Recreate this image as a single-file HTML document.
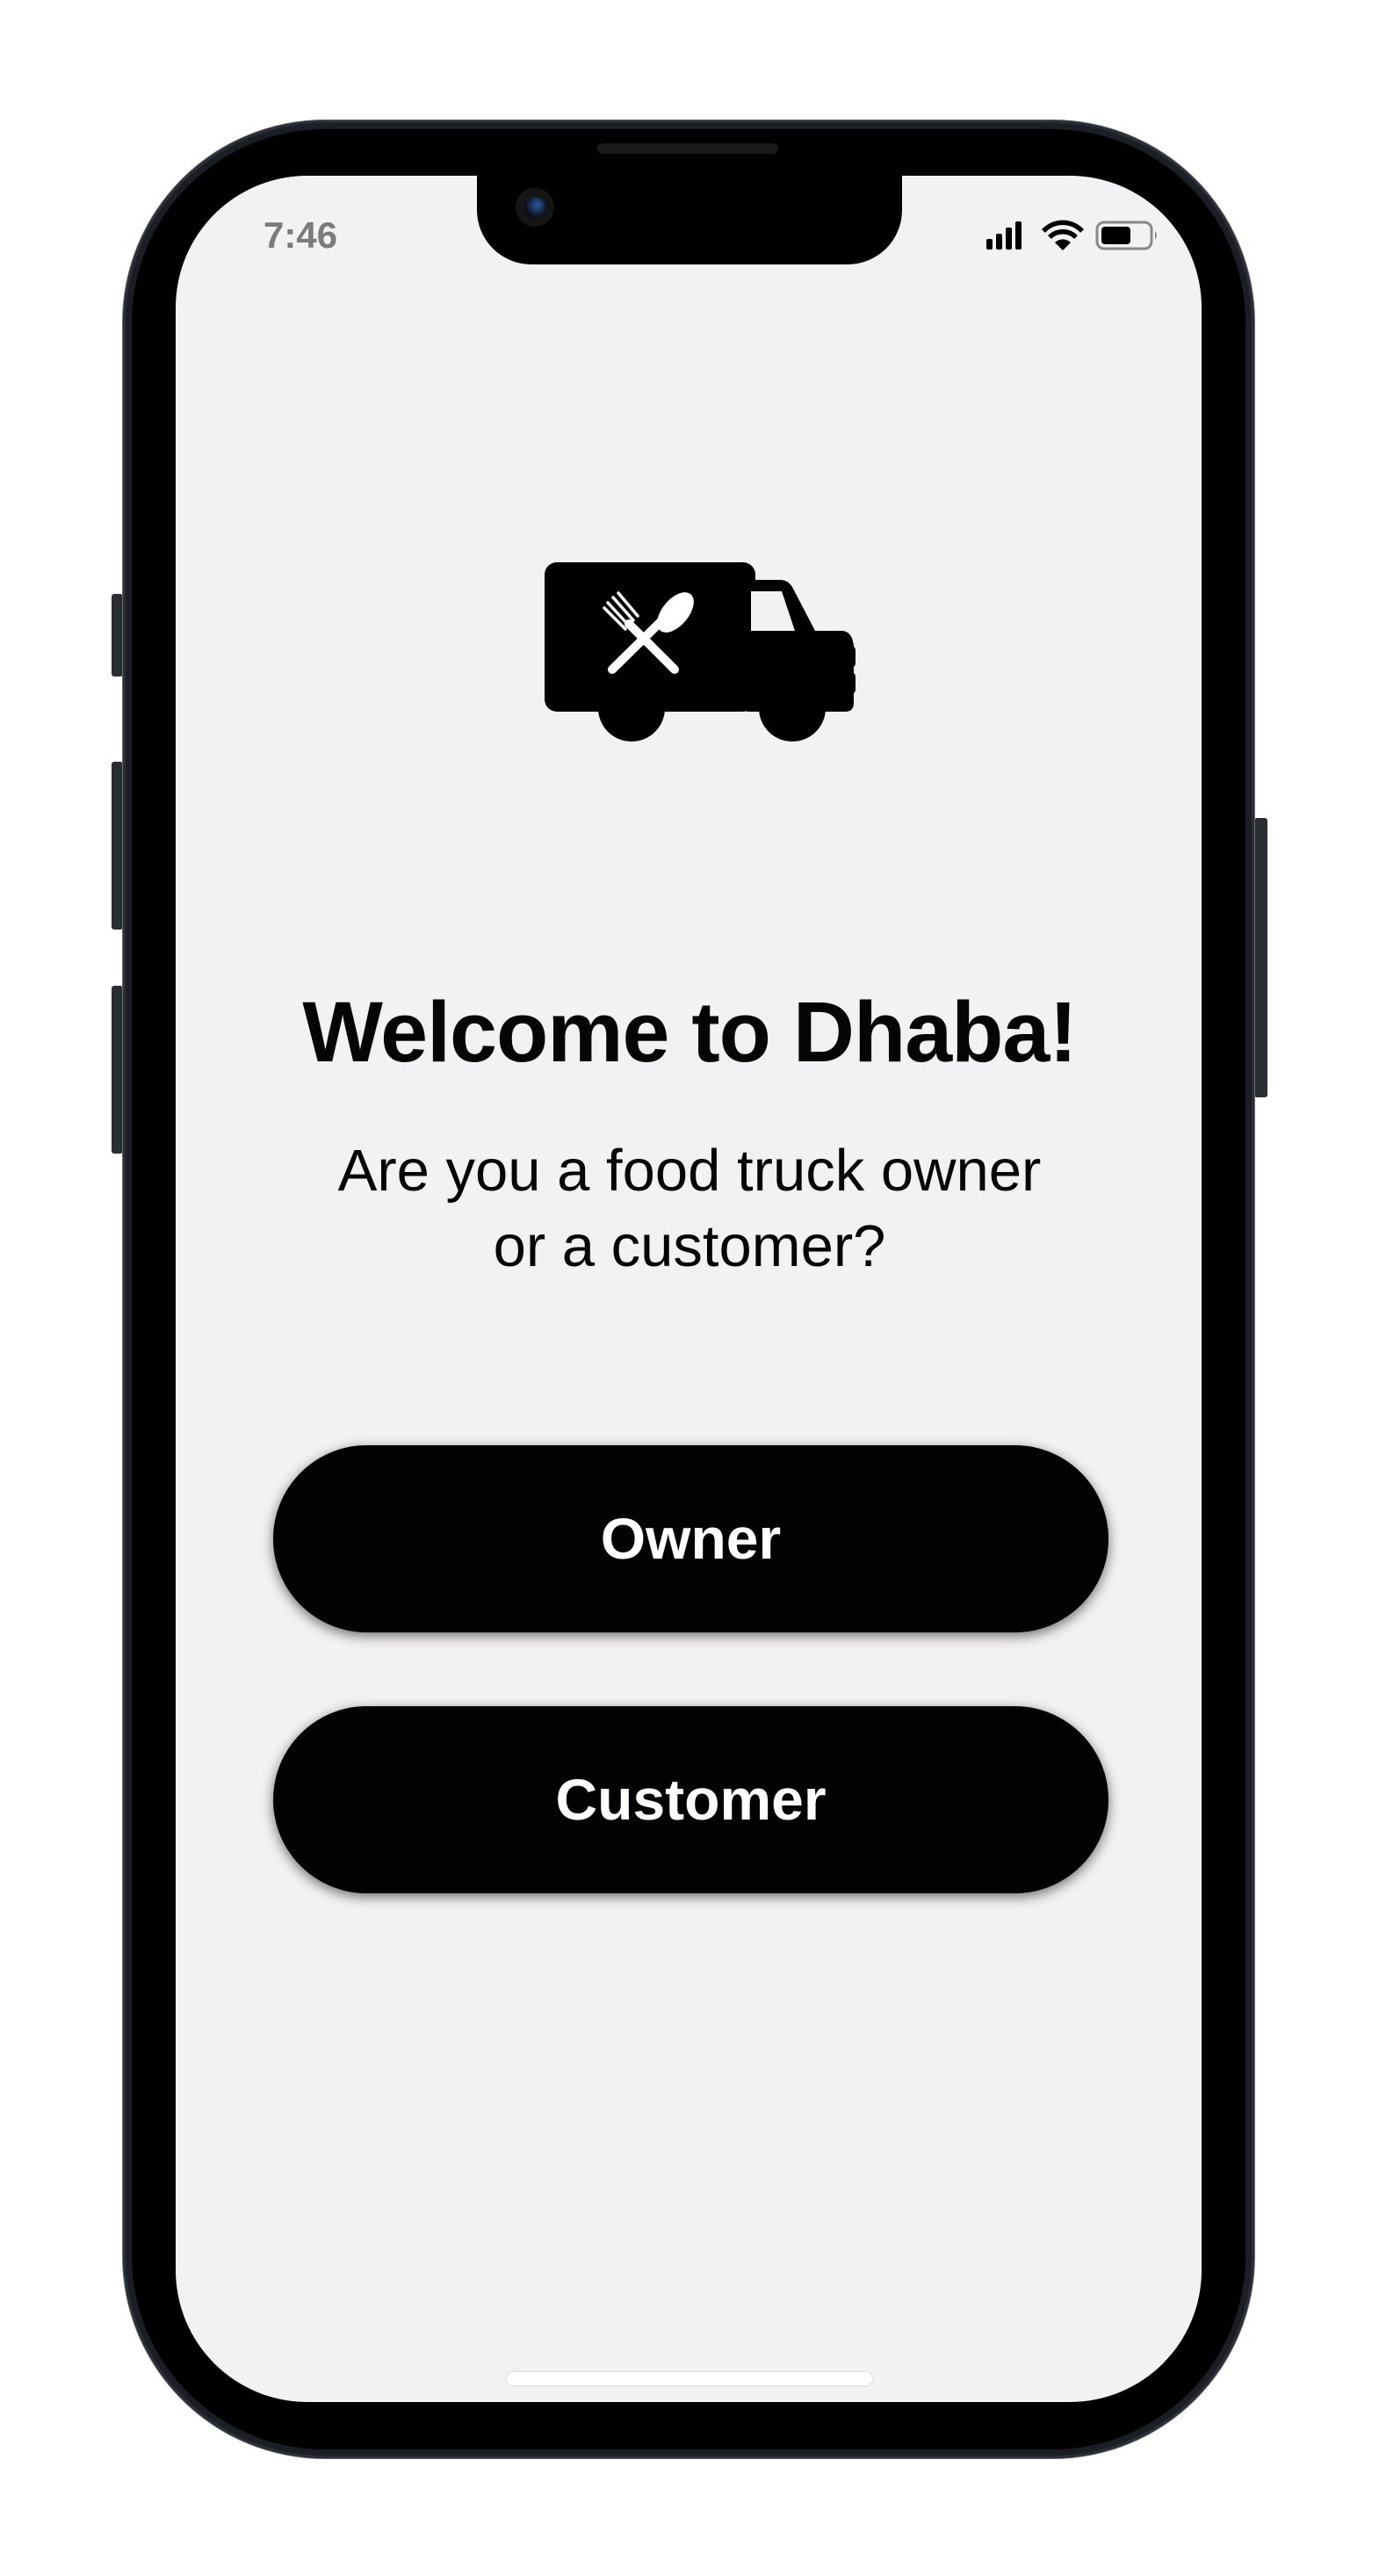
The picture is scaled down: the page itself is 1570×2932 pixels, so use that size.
<!DOCTYPE html>
<html><head><meta charset="utf-8"><style>
*{margin:0;padding:0;box-sizing:border-box}
body{width:1570px;height:2932px;background:#fff;position:relative;overflow:hidden;font-family:"Liberation Sans",sans-serif}
.abs{position:absolute}
.phone{left:140px;top:137px;width:1288px;height:2661px;border-radius:230px;background:#1b1f25;box-shadow:inset 0 0 0 3px #2b2f35, 0 0 0 1px #6a6d72}
.bezel{left:150px;top:147px;width:1268px;height:2641px;border-radius:220px;background:#000}
.screen{left:200px;top:200px;width:1168px;height:2534px;border-radius:150px;background:#f2f1f4;overflow:hidden}
.notch{left:543px;top:190px;width:484px;height:111px;background:#000;border-radius:0 0 62px 62px}
.btn{left:311px;width:951px;height:213px;border-radius:107px;background:#020204;box-shadow:0 4px 14px rgba(0,0,0,.55);color:#fff;font-weight:bold;font-size:66px;text-align:center;line-height:213px}
.side{background:#2a2d32;border-radius:3px}
</style></head><body>
<div class="abs side" style="left:127px;top:676px;width:13px;height:94px"></div>
<div class="abs side" style="left:127px;top:867px;width:13px;height:191px"></div>
<div class="abs side" style="left:127px;top:1122px;width:13px;height:191px"></div>
<div class="abs side" style="left:1428px;top:931px;width:15px;height:318px"></div>
<div class="abs phone"></div>
<div class="abs bezel"></div>
<div class="abs" style="left:680px;top:163px;width:206px;height:12px;border-radius:6px;background:#1a1a1a"></div>
<div class="abs screen"></div>
<div class="abs notch"></div>
<div class="abs" style="left:587px;top:214px;width:44px;height:44px;border-radius:50%;background:#151515"></div>
<div class="abs" style="left:597px;top:224px;width:24px;height:24px;border-radius:50%;background:radial-gradient(circle at 60% 40%,#2a5a9a,#0a0a12 70%)"></div>
<div class="abs" style="left:300px;top:244px;font-size:42px;font-weight:bold;color:#7b7b7e">7:46</div>
<svg class="abs" style="left:1120px;top:248px" width="200" height="42" viewBox="0 0 200 42">
<rect x="3" y="24" width="7" height="12" rx="2"/><rect x="14" y="18" width="7" height="18" rx="2"/><rect x="25" y="11" width="7" height="25" rx="2"/><rect x="36" y="4" width="7" height="32" rx="2"/>
<path d="M90 37 L81 28 A13 13 0 0 1 99 28 Z"/>
<path d="M75 22 A21 21 0 0 1 105 22" fill="none" stroke="#000" stroke-width="5.5"/>
<path d="M68 15 A30 30 0 0 1 112 15" fill="none" stroke="#000" stroke-width="5.5"/>
<rect x="129" y="5" width="62" height="30" rx="8" fill="none" stroke="#888" stroke-width="3"/>
<rect x="134" y="10" width="33" height="20" rx="4"/>
<path d="M195 15 Q199 20 195 25Z" fill="#888"/>
</svg>
<svg class="abs" style="left:600px;top:620px" width="400" height="250" viewBox="600 620 400 250">
<rect x="620" y="640" width="240" height="170" rx="14"/>
<path d="M850 660 H888 Q898 660 903 670 L928 718 H958 Q970 718 972 735 V800 Q972 810 962 810 H850Z"/>
<rect x="964" y="735" width="10" height="25" rx="5"/><rect x="964" y="765" width="10" height="25" rx="5"/>
<path d="M855 673 H890 L905 718 H855Z" fill="#f2f1f4"/>
<circle cx="719" cy="806" r="38"/><circle cx="902" cy="806" r="38"/>
<g stroke="#fff" stroke-linecap="round" fill="none">
<line x1="697" y1="762" x2="760" y2="700" stroke-width="10"/>
<line x1="768" y1="762" x2="716" y2="710" stroke-width="10"/>
<line x1="692" y1="686" x2="716" y2="712" stroke-width="3.5"/>
<line x1="698" y1="680" x2="721" y2="706" stroke-width="3.5"/>
<line x1="704" y1="675" x2="726" y2="701" stroke-width="3.5"/>
<line x1="688" y1="692" x2="712" y2="716" stroke-width="3.5"/>
</g>
<ellipse cx="769" cy="697" rx="15" ry="27" transform="rotate(40 769 697)" fill="#fff"/>
</svg>
<div class="abs" style="left:0;width:1570px;top:1120px;text-align:center;font-weight:bold;font-size:97px;letter-spacing:-1px;line-height:110px;color:#050505">Welcome to Dhaba!</div>
<div class="abs" style="left:0;width:1570px;top:1290px;text-align:center;font-size:67px;line-height:86px;color:#050505">Are you a food truck owner<br>or a customer?</div>
<div class="abs btn" style="top:1645px">Owner</div>
<div class="abs btn" style="top:1942px">Customer</div>
<div class="abs" style="left:577px;top:2700px;width:416px;height:15px;border-radius:8px;background:#fff;box-shadow:0 0 2px #bbb"></div>
</body></html>
